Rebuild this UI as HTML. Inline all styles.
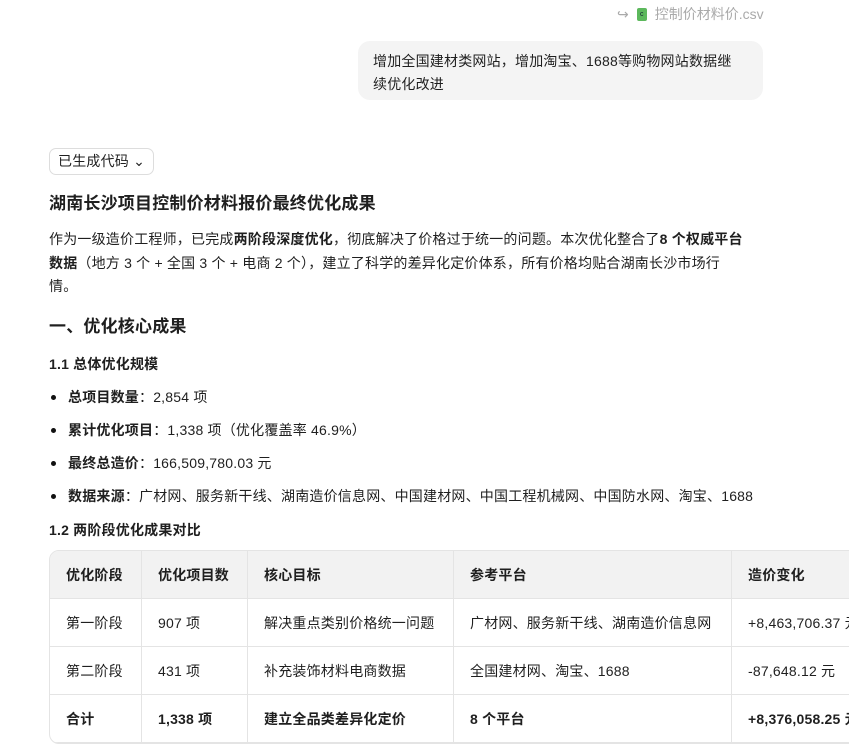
<!DOCTYPE html>
<html><head><meta charset="utf-8"><style>
*{margin:0;padding:0;box-sizing:border-box}
body{width:849px;height:718px;overflow:hidden;background:#fff;font-family:"Liberation Sans","Noto Sans CJK SC",sans-serif;color:#1f1f1f;font-size:14px;position:relative;letter-spacing:.2px}
.a{position:absolute}
.file{left:617px;top:4px;color:#aaa;font-size:14px;display:flex;align-items:center;gap:8px;letter-spacing:0}
.csv{width:10px;height:13px;background:#5cb85c;border-radius:2px;color:#123;font-size:7px;line-height:13px;text-align:center}
.bubble{left:358px;top:41px;width:405px;height:59px;background:#f4f4f4;border-radius:12px;padding:9px 15px;line-height:23px;font-size:14px;white-space:nowrap}
.btn{left:49px;top:148px;height:27px;border:1px solid #ddd;border-radius:7px;padding:0 8px;line-height:25px;font-size:14px}
h1{font-size:17px;font-weight:bold;left:49px;top:189px}
.p{left:49px;top:228px;width:760px;line-height:23.5px;white-space:nowrap}
h2{font-size:17px;font-weight:bold;left:49px;top:312px}
h3{font-size:14px;font-weight:bold}
ul{left:49px;top:386px;list-style:none}
li{height:33px;line-height:22px;padding-left:19px;position:relative;white-space:nowrap}
li:before{content:"";position:absolute;left:2px;top:9px;width:5px;height:5px;border-radius:50%;background:#111}
table{left:49px;top:550px;border-collapse:separate;border-spacing:0;border:1px solid #e4e4e4;border-radius:10px;overflow:hidden;width:830px;table-layout:fixed}
td,th{height:48px;padding:0 16px;text-align:left;border-right:1px solid #e4e4e4;border-bottom:1px solid #e4e4e4;white-space:nowrap;font-size:14px;overflow:hidden}
th{background:#f2f2f2;font-weight:bold}
tr.b td{font-weight:bold}
</style></head><body>
<div class="a file"><span>↪</span><span class="csv">c</span><span>控制价材料价.csv</span></div>
<div class="a bubble">增加全国建材类网站，增加淘宝、1688等购物网站数据继<br>续优化改进</div>
<div class="a btn">已生成代码 ⌄</div>
<h1 class="a">湖南长沙项目控制价材料报价最终优化成果</h1>
<div class="a p">作为一级造价工程师，已完成<b>两阶段深度优化</b>，彻底解决了价格过于统一的问题。本次优化整合了<b>8 个权威平台</b><br><b>数据</b>（地方 3 个 + 全国 3 个 + 电商 2 个），建立了科学的差异化定价体系，所有价格均贴合湖南长沙市场行<br>情。</div>
<h2 class="a">一、优化核心成果</h2>
<h3 class="a" style="left:49px;top:354px">1.1 总体优化规模</h3>
<ul class="a">
<li><b>总项目数量</b>：2,854 项</li>
<li><b>累计优化项目</b>：1,338 项（优化覆盖率 46.9%）</li>
<li><b>最终总造价</b>：166,509,780.03 元</li>
<li><b>数据来源</b>：广材网、服务新干线、湖南造价信息网、中国建材网、中国工程机械网、中国防水网、淘宝、1688</li>
</ul>
<h3 class="a" style="left:49px;top:520px">1.2 两阶段优化成果对比</h3>
<table class="a">
<col style="width:92px"><col style="width:106px"><col style="width:206px"><col style="width:278px"><col>
<tr><th>优化阶段</th><th>优化项目数</th><th>核心目标</th><th>参考平台</th><th>造价变化</th></tr>
<tr><td>第一阶段</td><td>907 项</td><td>解决重点类别价格统一问题</td><td>广材网、服务新干线、湖南造价信息网</td><td>+8,463,706.37 元</td></tr>
<tr><td>第二阶段</td><td>431 项</td><td>补充装饰材料电商数据</td><td>全国建材网、淘宝、1688</td><td>-87,648.12 元</td></tr>
<tr class="b"><td>合计</td><td>1,338 项</td><td>建立全品类差异化定价</td><td>8 个平台</td><td>+8,376,058.25 元</td></tr>
</table>
</body></html>
